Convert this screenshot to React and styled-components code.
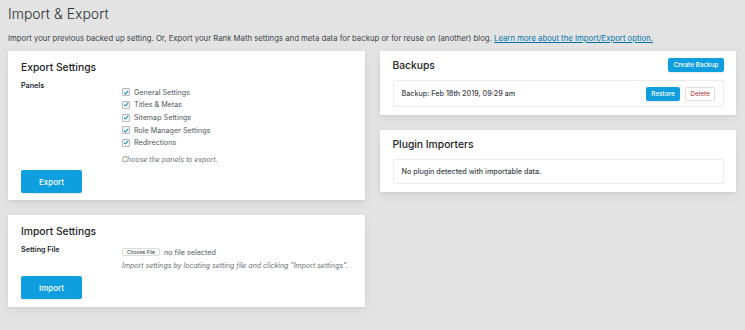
import styled, { createGlobalStyle } from 'styled-components';

const GlobalStyle = createGlobalStyle`
  html, body {
    margin: 0;
    background: #e3e3e3;
  }
  body {
    font-family: Inter, "Liberation Sans", Arial, sans-serif;
    -webkit-font-smoothing: antialiased;
  }
`;

const Page = styled.div`
  width: 745px;
  height: 330px;
  box-sizing: border-box;
  padding: 4px 9px 0 8px;
  overflow: hidden;
`;

const Title = styled.h1`
  margin: 0;
  font-size: 14px;
  line-height: 20px;
  font-weight: 300;
  color: #2c3338;
`;

const Intro = styled.p`
  margin: 8px 0 0;
  font-size: 7.75px;
  line-height: 12px;
  color: #3c434a;
  white-space: nowrap;

  a {
    color: #0073aa;
    text-decoration: underline;
  }
`;

const Columns = styled.div`
  display: grid;
  grid-template-columns: 1fr 1fr;
  gap: 15px;
  align-items: start;
  margin-top: 7px;
`;

const Column = styled.div`
  display: flex;
  flex-direction: column;
  gap: 15px;
`;

const Card = styled.section`
  background: #fff;
  padding: ${(p) => p.$top}px 12px ${(p) => p.$bottom}px 13px;
  box-shadow: 0 1px 3px rgba(0, 0, 0, 0.07), 0 4px 10px rgba(0, 0, 0, 0.05);
`;

const CardTitle = styled.h2`
  margin: 0;
  font-size: 10.3px;
  line-height: 14px;
  font-weight: 500;
  color: #1d2327;
`;

const FormRow = styled.div`
  display: grid;
  grid-template-columns: 101px 1fr;
  margin-top: 7px;
`;

const Label = styled.div`
  font-size: 7.2px;
  line-height: 10px;
  font-weight: 600;
  color: #23282d;
`;

const Field = styled.div`
  padding-top: ${(p) => p.$offset}px;
`;

const CheckList = styled.div`
  display: flex;
  flex-direction: column;
`;

const CheckItem = styled.label`
  display: flex;
  align-items: center;
  gap: 4px;
  height: 12.65px;
  font-size: 7.2px;
  color: #50575e;
`;

const Box = styled.span`
  display: inline-flex;
  align-items: center;
  justify-content: center;
  width: 8px;
  height: 8px;
  box-sizing: border-box;
  border: 1px solid #b4b9be;
  border-radius: 1px;
  background: #fff;
  box-shadow: inset 0 1px 2px rgba(0, 0, 0, 0.08);
`;

const Hint = styled.p`
  margin: ${(p) => p.$gap}px 0 0;
  font-size: 7px;
  line-height: 10px;
  font-style: italic;
  color: #6c7176;
  white-space: nowrap;
`;

const PrimaryButton = styled.button`
  display: inline-flex;
  align-items: center;
  justify-content: center;
  width: ${(p) => p.$w}px;
  height: ${(p) => p.$h}px;
  padding: 0;
  border: none;
  border-radius: 2px;
  background: #0f9fdf;
  color: #fff;
  font-family: inherit;
  font-size: ${(p) => p.$size}px;
  font-weight: 500;
  box-shadow: 0 1px 1px rgba(0, 0, 0, 0.08);
`;

const CardAction = styled(PrimaryButton)`
  margin-top: 5px;
`;

const FileRow = styled.div`
  display: flex;
  align-items: center;
  gap: 4px;
  height: 10px;
  font-size: 7.2px;
  color: #50575e;
`;

const FileButton = styled.span`
  display: inline-flex;
  align-items: center;
  justify-content: center;
  width: 38px;
  height: 8px;
  box-sizing: border-box;
  border: 1px solid #ddd;
  border-radius: 2px;
  background: #f7f7f7;
  font-size: 5px;
  color: #444;
`;

const CardHeader = styled.div`
  display: flex;
  align-items: center;
  justify-content: space-between;
  height: 14px;
`;

const InnerBox = styled.div`
  display: flex;
  align-items: center;
  justify-content: space-between;
  height: ${(p) => p.$h}px;
  box-sizing: border-box;
  margin-top: 8px;
  padding: 0 8px;
  border: 1px solid #ececec;
  border-radius: 2px;
  font-size: 7.2px;
  font-weight: 500;
  color: #3c434a;
`;

const Actions = styled.div`
  display: flex;
  gap: 5px;
`;

const GhostButton = styled.button`
  display: inline-flex;
  align-items: center;
  justify-content: center;
  width: 30px;
  height: 14px;
  padding: 0;
  border: 1px solid #e3dcdc;
  border-radius: 2px;
  background: #fff;
  color: #b32d2e;
  font-family: inherit;
  font-size: 6.4px;
`;

const panels = [
  'General Settings',
  'Titles & Metas',
  'Sitemap Settings',
  'Role Manager Settings',
  'Redirections',
];

const Check = () => (
  <Box>
    <svg width="7" height="7" viewBox="0 0 7 7">
      <polyline points="1.2,3.6 2.9,5.3 6,1.6" fill="none" stroke="#1e8cbe" strokeWidth="1.3" />
    </svg>
  </Box>
);

export default function App() {
  return (
    <Page>
      <GlobalStyle />
      <Title>Import &amp; Export</Title>
      <Intro>
        Import your previous backed up setting. Or, Export your Rank Math settings and meta data for backup or for
        reuse on (another) blog. <a href="#">Learn more about the Import/Export option.</a>
      </Intro>

      <Columns>
        <Column>
          <Card $top={9} $bottom={7}>
            <CardTitle>Export Settings</CardTitle>
            <FormRow>
              <Label>Panels</Label>
              <Field $offset={5}>
                <CheckList>
                  {panels.map((name) => (
                    <CheckItem key={name}>
                      <Check />
                      {name}
                    </CheckItem>
                  ))}
                </CheckList>
                <Hint $gap={6}>Choose the panels to export.</Hint>
              </Field>
            </FormRow>
            <CardAction $w={61} $h={23} $size={8}>Export</CardAction>
          </Card>

          <Card $top={9} $bottom={8}>
            <CardTitle>Import Settings</CardTitle>
            <FormRow>
              <Label>Setting File</Label>
              <Field $offset={2}>
                <FileRow>
                  <FileButton>Choose File</FileButton>
                  no file selected
                </FileRow>
                <Hint $gap={4}>Import settings by locating setting file and clicking "Import settings".</Hint>
              </Field>
            </FormRow>
            <CardAction $w={61} $h={23} $size={8}>Import</CardAction>
          </Card>
        </Column>

        <Column>
          <Card $top={7} $bottom={8}>
            <CardHeader>
              <CardTitle>Backups</CardTitle>
              <PrimaryButton $w={56} $h={14} $size={6.4}>Create Backup</PrimaryButton>
            </CardHeader>
            <InnerBox $h={27}>
              Backup: Feb 18th 2019, 09:29 am
              <Actions>
                <PrimaryButton $w={34} $h={14} $size={6.4}>Restore</PrimaryButton>
                <GhostButton>Delete</GhostButton>
              </Actions>
            </InnerBox>
          </Card>

          <Card $top={7} $bottom={8}>
            <CardHeader>
              <CardTitle>Plugin Importers</CardTitle>
            </CardHeader>
            <InnerBox $h={25}>No plugin detected with importable data.</InnerBox>
          </Card>
        </Column>
      </Columns>
    </Page>
  );
}
